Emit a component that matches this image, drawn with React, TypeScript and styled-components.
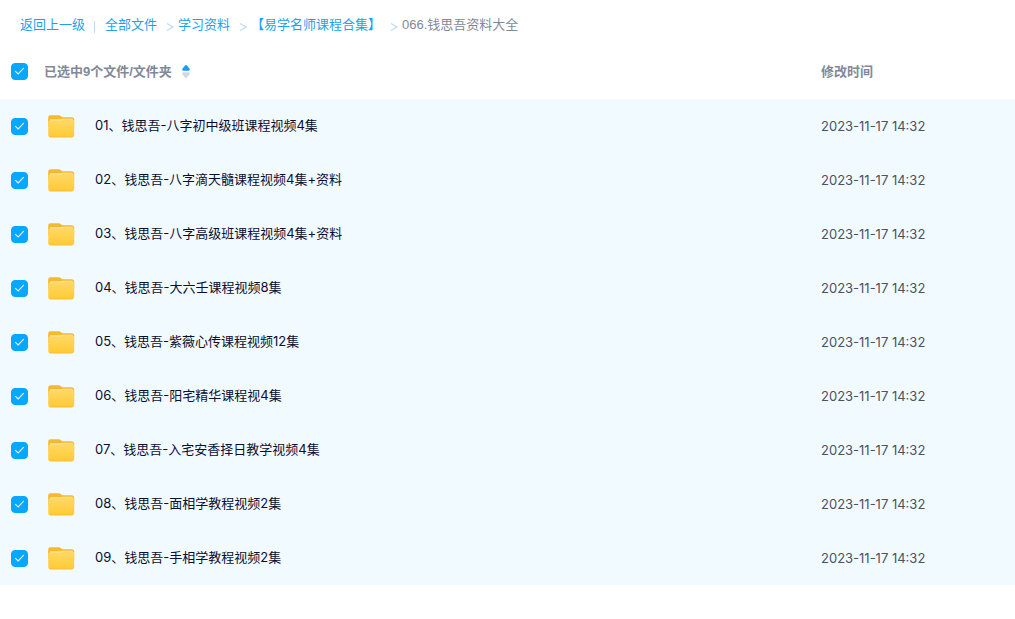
import React, { useState } from "react";
import styled, { createGlobalStyle } from "styled-components";

const GlobalStyle = createGlobalStyle`
  *, *::before, *::after { box-sizing: border-box; }
  body {
    margin: 0;
    background: #fff;
    color: #0a0e30;
    font: 13px/20px Inter, "Noto Sans CJK SC", sans-serif;
  }
`;

const Page = styled.main`
  width: 100%;
`;

const Breadcrumb = styled.nav`
  display: flex;
  align-items: center;
  height: 44px;
  padding: 6px 20px 0;
  font-family: "Liberation Sans", "Noto Sans CJK SC", sans-serif;
  white-space: nowrap;
`;

const CrumbLink = styled.a`
  color: #1e9ff0;
  text-decoration: none;
  &:hover { text-decoration: underline; }
`;

const Divider = styled.span`
  width: 1px;
  height: 12px;
  margin: 4px 10px 0 9px;
  background: #c4d8f4;
`;

const Chevron = styled.svg`
  flex: none;
  width: 8px;
  height: 10px;
  margin: 4px 4px 0 9px;
  fill: none;
  stroke: #c4dbf5;
`;

const CurrentCrumb = styled.span`
  color: #818999;
`;

const FileTable = styled.table`
  width: 100%;
  table-layout: fixed;
  border-collapse: collapse;
`;

const CheckCol = styled.col`
  width: 44px;
`;

const TimeCol = styled.col`
  width: 194px;
`;

const HeadCell = styled.th`
  height: 55px;
  padding: 0;
  color: #818999;
  font-family: "Liberation Sans", "Noto Sans CJK SC", sans-serif;
  font-weight: 700;
  text-align: left;
`;

const Row = styled.tr<{ $selected: boolean }>`
  background: ${(p) => (p.$selected ? "#f1fafe" : "#fff")};
`;

const Cell = styled.td`
  height: 54px;
  padding: 0;
`;

const TimeCell = styled(Cell)`
  color: #4b5260;
`;

const CheckBox = styled.label`
  display: grid;
  width: 17px;
  height: 17px;
  margin-left: 11px;
  cursor: pointer;
  > * { grid-area: 1 / 1; }
`;

const CheckInput = styled.input`
  appearance: none;
  width: 17px;
  height: 17px;
  margin: 0;
  border: 1px solid #c4d8f4;
  border-radius: 4px;
  background: #fff;
  &:checked { background: #06a7ff; border-color: #06a7ff; }
`;

const Tick = styled.svg`
  width: 17px;
  height: 17px;
  fill: none;
  stroke: #e6f6ff;
  pointer-events: none;
`;

const HeadLabel = styled.div`
  display: flex;
  align-items: center;
  gap: 10px;
`;

const SortButton = styled.button`
  display: flex;
  padding: 0;
  border: 0;
  background: none;
  cursor: pointer;
`;

const SortIcon = styled.svg`
  width: 8px;
  height: 14px;
`;

const FileEntry = styled.div`
  display: flex;
  align-items: center;
  gap: 20px;
  padding-left: 4px;
`;

const FileName = styled.span`
  padding-bottom: 2px;
`;

const FolderIcon = styled.svg`
  flex: none;
  width: 27px;
  height: 23px;
`;

const files = [
  "01、钱思吾-八字初中级班课程视频4集",
  "02、钱思吾-八字滴天髓课程视频4集+资料",
  "03、钱思吾-八字高级班课程视频4集+资料",
  "04、钱思吾-大六壬课程视频8集",
  "05、钱思吾-紫薇心传课程视频12集",
  "06、钱思吾-阳宅精华课程视4集",
  "07、钱思吾-入宅安香择日教学视频4集",
  "08、钱思吾-面相学教程视频2集",
  "09、钱思吾-手相学教程视频2集",
];

const Separator = () => (
  <Chevron viewBox="0 0 8 10" aria-hidden="true">
    <path d="M1 1.5 L7 5 L1 8.5" strokeWidth="1.3" />
  </Chevron>
);

interface CheckProps {
  label: string;
  checked: boolean;
  onChange: () => void;
}

const Check = ({ label, checked, onChange }: CheckProps) => (
  <CheckBox>
    <CheckInput type="checkbox" aria-label={label} checked={checked} onChange={onChange} />
    <Tick viewBox="0 0 17 17" aria-hidden="true">
      <path d="M4.2 8.2 L7.2 11 L12.7 5.2" strokeWidth="1.1" />
    </Tick>
  </CheckBox>
);

const Folder = () => (
  <FolderIcon viewBox="0 0 27 23" aria-hidden="true">
    <path d="M0.2 2.5 Q0.2 0.2 2.6 0.2 H10.5 Q12 0.2 13 1.2 L14.2 2.2 H23.5 Q26.2 2.2 26.2 4.9 V12 H0.2Z" fill="#f6b92e" />
    <path d="M2 4.3 H13 L15 3.8 H24.6 V9 H2Z" fill="#ffe49a" />
    <path d="M0.2 8 Q0.2 5.6 2.7 5.6 H12 Q13.3 5.6 14.2 5.1 Q15 4.6 16.3 4.6 H24 Q26.2 4.6 26.2 7 V19.6 Q26.2 22.4 23.5 22.4 H2.9 Q0.2 22.4 0.2 19.6Z" fill="url(#folderFront)" />
    <defs>
      <linearGradient id="folderFront" x1="0" y1="0" x2="0" y2="1">
        <stop offset="0" stopColor="#ffd866" />
        <stop offset="0.9" stopColor="#ffcb38" />
        <stop offset="1" stopColor="#f9bd2b" />
      </linearGradient>
    </defs>
  </FolderIcon>
);

export default function App() {
  const [selected, setSelected] = useState<boolean[]>(files.map(() => true));
  const [descending, setDescending] = useState(false);
  const count = selected.filter(Boolean).length;
  const order = files.map((_, i) => i);
  if (descending) order.reverse();

  return (
    <Page>
      <GlobalStyle />
      <Breadcrumb>
        <CrumbLink href="#up">返回上一级</CrumbLink>
        <Divider />
        <CrumbLink href="#all">全部文件</CrumbLink>
        <Separator />
        <CrumbLink href="#study">学习资料</CrumbLink>
        <Separator />
        <CrumbLink href="#courses">【易学名师课程合集】</CrumbLink>
        <Separator />
        <CurrentCrumb>066.钱思吾资料大全</CurrentCrumb>
      </Breadcrumb>
      <FileTable>
        <colgroup>
          <CheckCol />
          <col />
          <TimeCol />
        </colgroup>
        <thead>
          <tr>
            <HeadCell>
              <Check
                label="全选"
                checked={count === files.length}
                onChange={() => setSelected(files.map(() => count !== files.length))}
              />
            </HeadCell>
            <HeadCell>
              <HeadLabel>
                已选中{count}个文件/文件夹
                <SortButton aria-label="排序" onClick={() => setDescending(!descending)}>
                  <SortIcon viewBox="0 0 8 14" aria-hidden="true">
                    <path d="M4 0 Q4.6 0 5.2 0.7 L7.6 3.8 Q8.2 5.6 6.8 5.8 H1.2 Q-0.2 5.6 0.4 3.8 L2.8 0.7 Q3.4 0 4 0Z" fill={descending ? "#d4d7de" : "#1c9cf0"} />
                    <path d="M4 13 Q4.6 13 5.2 12.3 L7.6 9.2 Q8.2 7.4 6.8 7.2 H1.2 Q-0.2 7.4 0.4 9.2 L2.8 12.3 Q3.4 13 4 13Z" fill={descending ? "#1c9cf0" : "#d4d7de"} />
                  </SortIcon>
                </SortButton>
              </HeadLabel>
            </HeadCell>
            <HeadCell>修改时间</HeadCell>
          </tr>
        </thead>
        <tbody>
          {order.map((i) => (
            <Row key={files[i]} $selected={selected[i]}>
              <Cell>
                <Check
                  label={files[i]}
                  checked={selected[i]}
                  onChange={() => setSelected(selected.map((s, j) => (j === i ? !s : s)))}
                />
              </Cell>
              <Cell>
                <FileEntry>
                  <Folder />
                  <FileName>{files[i]}</FileName>
                </FileEntry>
              </Cell>
              <TimeCell>2023-11-17 14:32</TimeCell>
            </Row>
          ))}
        </tbody>
      </FileTable>
    </Page>
  );
}
